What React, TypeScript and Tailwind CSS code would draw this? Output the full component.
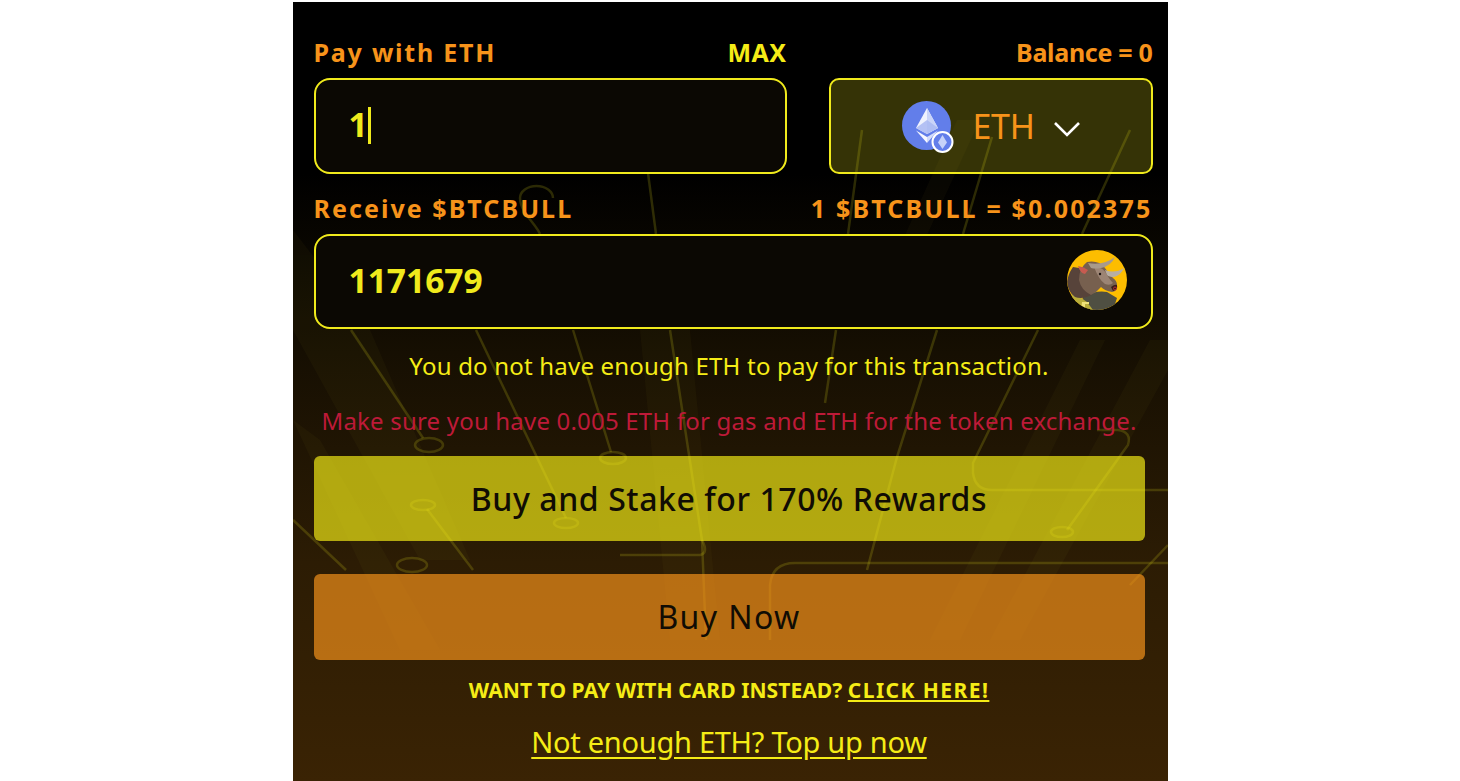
const font = { fontFamily: '"Noto Sans", sans-serif' };

function Circuit() {
  const c = "#d8d21a";
  return (
    <svg className="absolute left-0 top-0 h-full w-full" viewBox="293 2 875 779" preserveAspectRatio="none" fill="none">
      <g fill="#8a8420" opacity="0.055">
        <polygon points="957,120 980,120 927,235 905,235" />
        <polygon points="293,420 320,440 440,650 400,650" />
        <polygon points="1080,340 1105,340 960,640 930,640" />
        <polygon points="1150,340 1168,340 1168,370 1020,640 990,640" />
        <polygon points="640,330 690,330 720,640 670,640" />
        <polygon points="293,230 370,330 470,560 420,560 293,330" />
      </g>
      <g stroke={c} strokeOpacity="0.2" strokeWidth="2.5">
        <path d="M351 330L423 438" />
        <ellipse cx="429" cy="445" rx="14" ry="7" />
        <path d="M476 330L566 518" />
        <ellipse cx="566" cy="523" rx="12" ry="5" />
        <path d="M573 330L611 452" />
        <ellipse cx="613" cy="458" rx="13" ry="6" />
        <path d="M670 330L702 540L706 640" />
        <ellipse cx="423" cy="505" rx="12" ry="5" />
        <path d="M427 509L473 570" />
        <path d="M293 520L346 570" />
        <ellipse cx="412" cy="565" rx="15" ry="7" />
        <path d="M540 234C536 224 520 212 520 198A15 11 0 0 1 553 198" />
        <path d="M648 173L656 234" />
        <path d="M862 130L848 234" />
        <path d="M992 137L963 234" />
        <path d="M1130 130L1082 234" />
        <path d="M836 330L825 403" />
        <path d="M937 330L897 457L867 570" />
        <path d="M1038 330L973 463V473Q975 490 992 490H1168" />
        <path d="M1097 430H1118Q1132 432 1128 445L1067 530" />
        <ellipse cx="1062" cy="532" rx="11" ry="5" />
        <path d="M1168 545L1130 585" />
        <path d="M620 555H700Q709 553 702 540" />
        <path d="M770 640V585Q772 563 795 563H1168" />
      </g>
    </svg>
  );
}

function EthIcon() {
  return (
    <svg width="54" height="54" viewBox="0 0 54 54" className="-mr-[5px] ml-[2px] mt-[3px] shrink-0">
      <circle cx="24.5" cy="24.5" r="24.5" fill="#627eea" />
      <polygon points="25,7 14,27 25,33 36,27" fill="#ffffff" fillOpacity="0.9" />
      <polygon points="25,7 25,33 36,27" fill="#c9d4f8" />
      <polygon points="25,19 14,27 25,33 36,27" fill="#a9b8f2" fillOpacity="0.85" />
      <polygon points="14,29.5 25,42 25,36" fill="#ffffff" fillOpacity="0.95" />
      <polygon points="36,29.5 25,42 25,36" fill="#d3dcfa" />
      <circle cx="40.5" cy="41" r="10" fill="#627eea" stroke="#ffffff" strokeWidth="2" />
      <polygon points="40.5,34 36,41.5 40.5,48 45,41.5" fill="#c6d2f9" />
    </svg>
  );
}

function BullIcon() {
  return (
    <svg width="60" height="60" viewBox="0 0 60 60" className="mb-[3px] shrink-0">
      <defs>
        <clipPath id="bullClip"><circle cx="30" cy="30" r="30" /></clipPath>
      </defs>
      <g clipPath="url(#bullClip)">
        <rect width="60" height="60" fill="#fdbd00" />
        <path d="M16 46Q30 40 40 42L50 48L46 60H14Z" fill="#4f4f42" />
        <path d="M4 42Q12 46 20 52L26 60H8Z" fill="#b9ad3a" />
        <path d="M15 52H22V54H18V60H14Z" fill="#efe27a" />
        <path d="M6 17Q1 24 0 32Q1 42 8 47Q16 50 26 44L24 20Z" fill="#57433a" />
        <path d="M20 12Q32 10 38 18Q42 24 46 28Q50 31 50 35Q51 41 45 42Q38 41 34 37Q30 42 24 45Q14 40 12 30Q12 18 20 12Z" fill="#77604f" />
        <path d="M27 17Q36 16 40 25Q43 30 46 33Q43 36 38 34Q32 30 27 17Z" fill="#9c8474" />
        <path d="M44 37Q48 34 50 35Q51 40 46 41Z" fill="#3a1c18" />
        <circle cx="48" cy="38.5" r="1.5" fill="none" stroke="#c0343a" strokeWidth="0.9" />
        <path d="M21 13Q36 16 48 7Q44 16 34 18Q28 19 24 18Z" fill="#a89a8c" />
        <path d="M38 20Q48 24 57 18Q54 25 47 27Q42 27 40 25Z" fill="#b8aea2" />
        <path d="M11 16Q17 17 21 20L18 24Q13 23 11 16Z" fill="#c75b50" />
        <circle cx="33" cy="24" r="1.2" fill="#1f1410" />
      </g>
    </svg>
  );
}

export default function App() {
  return (
    <div className="h-[781px] overflow-hidden bg-white pt-[2px]" style={font}>
      <div className="relative mx-auto h-[779px] w-[875px] overflow-hidden bg-[linear-gradient(180deg,#000000_0%,#000000_22%,#160f02_45%,#2c1c04_72%,#3a2304_100%)]">
        <Circuit />
        <div className="relative flex flex-col pl-[21px] pr-[15px] pt-[36px]">
          <div className="flex h-[28px] items-center text-[25px] font-bold leading-[28px]">
            <div className="flex w-[473px] items-center justify-between">
              <span className="tracking-[1.78px] text-[#f7931a]">Pay with ETH</span>
              <span className="tracking-[0.43px] text-[#f5ec16]">MAX</span>
            </div>
            <span className="ml-auto tracking-[-0.3px] text-[#f7931a]">Balance = 0</span>
          </div>
          <div className="mt-[12px] flex gap-[42px]">
            <div className="flex h-[96px] w-[473px] items-center rounded-[16px] border-2 border-[#f0ea1c] bg-[#0b0803] pl-[33px] text-[33.5px] font-bold leading-none text-[#f0ea1c]">
              <span className="-mt-[2px]">1</span>
              <span className="-mt-[2px] h-[37px] w-[3px] bg-[#f0ea1c]" />
            </div>
            <div className="flex h-[96px] flex-1 items-center justify-center rounded-[10px] border-2 border-[#f0ea1c] bg-[#f0ea1c]/[0.22] text-[34px] leading-none text-[#f7931a]">
              <EthIcon />
              <span className="ml-[21px] tracking-[-0.3px]">ETH</span>
              <svg width="28" height="16" viewBox="0 0 28 16" fill="none" className="ml-[18px] mt-[6px]">
                <path d="M2 2L14 14L26 2" stroke="#ffffff" strokeWidth="2.6" />
              </svg>
            </div>
          </div>
          <div className="mt-[20px] flex h-[28px] items-center justify-between text-[25px] font-bold leading-[28px] text-[#f7931a]">
            <span className="tracking-[2.06px]">Receive $BTCBULL</span>
            <span className="tracking-[2.17px]">1 $BTCBULL = $0.002375</span>
          </div>
          <div className="mt-[12px] flex h-[95px] items-center justify-between rounded-[16px] border-2 border-[#f0ea1c] bg-[#0b0803] pl-[33px] pr-[24px] text-[33.5px] font-bold leading-none text-[#f0ea1c]">
            <span className="-mt-[2px]">1171679</span>
            <BullIcon />
          </div>
          <div className="mr-[8px] flex flex-col items-center">
            <p className="mt-[23px] h-[28px] text-[24px] leading-[28px] tracking-[0.2px] text-[#f5ec16]">You do not have enough ETH to pay for this transaction.</p>
            <p className="mt-[27px] h-[28px] text-[24px] leading-[28px] tracking-[0.19px] text-[#bd1a38]">Make sure you have 0.005 ETH for gas and ETH for the token exchange.</p>
          </div>
          <button className="mr-[8px] mt-[21px] flex h-[85px] items-center justify-center rounded-[6px] bg-[#f5ec16]/[0.68] text-[32px] font-medium tracking-[0.57px] text-[#100c04]">
            Buy and Stake for 170% Rewards
          </button>
          <button className="mr-[8px] mt-[33px] flex h-[86px] items-center justify-center rounded-[6px] bg-[#f7931a]/[0.68] text-[32px] tracking-[1.4px] text-[#100c04]">
            Buy Now
          </button>
          <p className="mr-[8px] mt-[16px] h-[28px] text-center text-[21px] font-bold leading-[28px] text-[#f5ec16]">
            <span className="tracking-[0.07px]">WANT TO PAY WITH CARD INSTEAD?</span> <a className="tracking-[1.45px] underline underline-offset-2">CLICK HERE!</a>
          </p>
          <p className="mr-[8px] mt-[24px] h-[28px] text-center text-[29px] leading-[28px] tracking-[-0.27px] text-[#f5ec16]">
            <a className="underline underline-offset-4">Not enough ETH? Top up now</a>
          </p>
        </div>
      </div>
    </div>
  );
}
